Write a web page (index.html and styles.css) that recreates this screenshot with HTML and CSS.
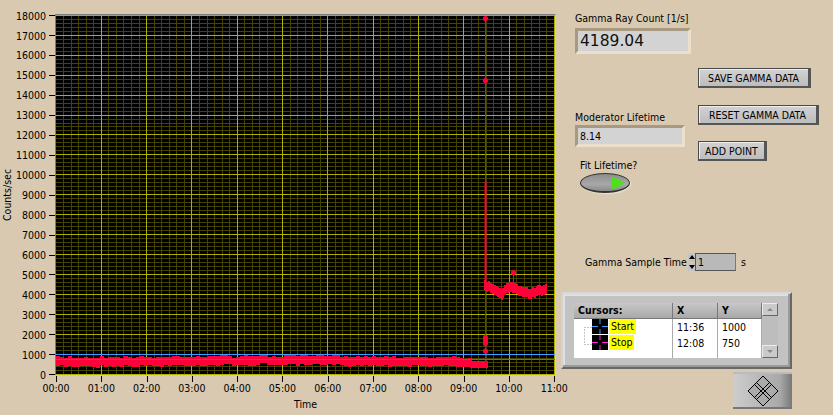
FILE: index.html
```html
<!DOCTYPE html>
<html lang="en">
<head>
<meta charset="utf-8">
<title>Gamma Ray Monitor</title>
<link rel="stylesheet" href="styles.css">
</head>
<body>
<div class="app">
  <section class="chart">
    <div class="ytitle">Counts/sec</div>
    <div class="yaxis">
      <span>18000</span><span>17000</span><span>16000</span><span>15000</span><span>14000</span><span>13000</span><span>12000</span><span>11000</span><span>10000</span><span>9000</span><span>8000</span><span>7000</span><span>6000</span><span>5000</span><span>4000</span><span>3000</span><span>2000</span><span>1000</span><span>0</span>
    </div>
    <div class="plot"><svg id="plot" width="499" height="360" viewBox="56 15 499 360"></svg></div>
    <div class="xaxis">
      <span>00:00</span><span>01:00</span><span>02:00</span><span>03:00</span><span>04:00</span><span>05:00</span><span>06:00</span><span>07:00</span><span>08:00</span><span>09:00</span><span>10:00</span><span>11:00</span>
    </div>
    <div class="xtitle">Time</div>
  </section>

  <aside class="side">
    <div class="top">
      <div class="readouts">
        <div class="label">Gamma Ray Count [1/s]</div>
        <div class="readout readout-big">4189.04</div>
        <div class="label label-mod">Moderator Lifetime</div>
        <div class="readout readout-small">8.14</div>
        <div class="label label-fit">Fit Lifetime?</div>
        <div class="toggle"><svg width="14" height="12" viewBox="0 0 14 12"><path d="M0 0.5 L3 0 L14 6 L3 12 L0 11.5Z" fill="#4fe01c"/></svg></div>
      </div>
      <div class="buttons">
        <button class="btn btn-save">SAVE GAMMA DATA</button>
        <button class="btn btn-reset">RESET GAMMA DATA</button>
        <button class="btn btn-add">ADD POINT</button>
      </div>
    </div>

    <div class="sample">
      <span class="label">Gamma Sample Time</span>
      <span class="spin"><i class="up"></i><i class="down"></i></span>
      <span class="samplebox">1</span>
      <span class="label unit">s</span>
    </div>

    <div class="cursors">
      <div class="table">
        <div class="head h1">Cursors:</div>
        <div class="head h2">X</div>
        <div class="head h3">Y</div>
        <div class="col names">
          <svg class="tree" width="8" height="18" viewBox="0 0 8 18"><path d="M7.5 .5H.5V17.5H7.5" fill="none" stroke="#888" stroke-dasharray="1 2"/></svg>
          <div class="cur"><svg width="16" height="15" viewBox="0 0 16 15"><rect width="16" height="15"/><path d="M0 7.5H6M10 7.5H16M8 0V5M8 10V15" stroke="#3c9cff"/></svg><b>Start</b></div>
          <div class="cur"><svg width="16" height="15" viewBox="0 0 16 15"><rect width="16" height="15"/><path d="M0 7.5H6M10 7.5H16M8 0V5M8 10V15" stroke="#ff20e0"/></svg><b>Stop</b></div>
        </div>
        <div class="col vals"><div>11:36</div><div>12:08</div></div>
        <div class="col vals"><div>1000</div><div>750</div></div>
      </div>
      <div class="scroll">
        <span class="sbtn"><i class="tri-up"></i></span>
        <span class="sbtn"><i class="tri-down"></i></span>
      </div>
    </div>

    <div class="navrow">
      <div class="nav">
        <svg width="32" height="32" viewBox="0 0 32 32"><path d="M16 1L31 16L16 31L1 16Z" fill="#ababab" stroke="#000"/><path d="M7.5 9.5L22.5 24.5M9.5 7.5L24.5 22.5M24.5 9.5L9.5 24.5M22.5 7.5L7.5 22.5" stroke="#000" fill="none"/></svg>
      </div>
    </div>
  </aside>
</div>
<script src="chart.js"></script>
</body>
</html>
```

FILE: styles.css
```css
* { box-sizing: border-box; }
html, body { margin: 0; padding: 0; }
body {
  background: #d9c9b1;
  color: #000;
  font: 10.5px "DejaVu Sans Condensed", "DejaVu Sans", sans-serif;
  font-stretch: condensed;
  overflow: hidden;
}
.app { display: flex; width: 833px; height: 415px; }

/* chart */
.chart {
  width: 561px;
  display: grid;
  grid-template-columns: 14px 41px 501px 5px;
  grid-template-rows: 14px 361px 22px 14px;
}
.ytitle {
  grid-column: 1;
  grid-row: 2;
  writing-mode: vertical-rl;
  transform: rotate(180deg);
  text-align: center;
  line-height: 14px;
  height: 361px;
}
.yaxis {
  grid-column: 1 / 3;
  grid-row: 1 / 3;
  padding-top: 5.6px;
  display: flex;
  flex-direction: column;
}
.yaxis span {
  height: 19.96px;
  line-height: 20px;
  display: flex;
  justify-content: flex-end;
  align-items: center;
  gap: 3px;
}
.yaxis span::after {
  content: "";
  width: 6px;
  height: 1px;
  background: #000;
}
.plot {
  grid-column: 3;
  grid-row: 2;
  background: #000;
  border-top: 1px solid #7c7c7c;
  border-left: 1px solid #7c7c7c;
  border-right: 1px solid #cfcfcf;
}
.plot svg { display: block; }
.xaxis {
  grid-column: 1 / -1;
  grid-row: 3;
  display: flex;
  padding-left: 33.35px;
}
.xaxis span {
  width: 45.3px;
  flex: none;
  text-align: center;
  line-height: 14px;
  padding-top: 6px;
  position: relative;
}
.xaxis span::before {
  content: "";
  position: absolute;
  left: 50%;
  top: 1px;
  width: 1px;
  height: 6px;
  background: #000;
}
.xtitle {
  grid-column: 1 / -1;
  grid-row: 4;
  text-align: center;
  padding-left: 50px;
  line-height: 14px;
}

/* right column */
.side { width: 272px; display: flex; flex-direction: column; }
.top { display: flex; height: 253px; }
.readouts { width: 137px; padding: 12px 0 0 14px; }
.label { line-height: 13px; white-space: nowrap; display: block; }
.readout {
  background: #d3d3d3;
  border: 3px solid;
  border-color: #a89a82 #ece0cc #ece0cc #a89a82;
  display: flex;
  align-items: center;
}
.readout-big {
  width: 116px;
  height: 26px;
  margin-top: 3px;
  padding-left: 2px;
  font: 15.5px "DejaVu Sans", sans-serif;
  color: #111;
}
.label-mod { margin-top: 57px; }
.readout-small {
  width: 110px;
  height: 22px;
  margin-top: 1px;
  padding-left: 2px;
}
.label-fit { margin: 12px 0 0 5px; }
.toggle {
  margin: 1px 0 0 5px;
  width: 50px;
  height: 20px;
  border-radius: 50%;
  border: 1px solid #333;
  border-bottom-width: 2px;
  background: linear-gradient(#8c8c8c, #a8a8a8 60%, #8a8a8a);
  box-shadow: 1px 1px 1px #f0e6d4;
  display: flex;
  align-items: center;
  justify-content: flex-end;
  padding-right: 4px;
}
.toggle svg { display: block; }
.buttons { display: flex; flex-direction: column; align-items: flex-start; padding-top: 68px; }
.btn {
  font: inherit;
  font-stretch: condensed;
  color: #000;
  height: 20px;
  padding: 0;
  border: 1px solid #4a4a4a;
  border-right: 3px solid #555;
  border-bottom: 2px solid #555;
  background: linear-gradient(#d2d2d2, #bdbdbd);
  box-shadow: inset 1px 1px 0 #eee;
}
.btn-save { width: 113px; }
.btn-reset { width: 121px; margin-top: 17px; }
.btn-add { width: 69px; margin-top: 16px; }

.sample { display: flex; align-items: center; height: 18px; margin-left: 24px; }
.sample .label { width: 103px; }
.spin { width: 7px; height: 18px; display: flex; flex-direction: column; gap: 1px; }
.spin i { flex: 1; background: #c4c4c4; position: relative; display: block; }
.spin i::after {
  content: "";
  position: absolute;
  left: 0.5px;
  border-left: 3px solid transparent;
  border-right: 3px solid transparent;
}
.spin .up::after { top: 2px; border-bottom: 4px solid #000; }
.spin .down::after { top: 2px; border-top: 4px solid #000; }
.samplebox {
  width: 41px;
  height: 18px;
  background: #b9b9b9;
  border: 1px solid #555;
  border-right-color: #777;
  padding-left: 2px;
  line-height: 16px;
}
.sample .unit { width: auto; margin-left: 5px; }

.cursors {
  width: 231px;
  height: 77px;
  margin-top: 21px;
  display: flex;
  padding: 9px 12px 8px 11px;
  background: #c2c2c2;
  border: 2px solid;
  border-color: #d8d8d8 #686868 #686868 #d2d2d2;
  box-shadow: inset -2px -2px 0 #9a9a9a, inset 2px 2px 0 #e0e0e0;
}
.table {
  width: 188px;
  height: 55px;
  background: #fff;
  display: grid;
  grid-template-columns: 99px 45px 44px;
  grid-template-rows: 16px 39px;
}
.head {
  background: linear-gradient(#c8c8c8, #a8a8a8);
  border-bottom: 1px solid #777;
  border-right: 1px solid #777;
  font-weight: bold;
  line-height: 15px;
  padding-left: 4px;
}
.col { border-right: 1px solid #aaa; position: relative; }
.col > div { height: 16px; line-height: 16px; padding-left: 4px; }
.names { padding-left: 18px; }
.names .cur { display: flex; height: 16px; padding: 0; align-items: flex-start; }
.names .cur svg { display: block; flex: none; }
.names .cur b { font-weight: normal; background: #ffff00; padding: 0 2px; height: 15px; line-height: 15px; margin-left: 1px; }
.tree { position: absolute; left: 10px; top: 8px; }
.scroll {
  width: 16px;
  height: 55px;
  background: #bdbdbd;
  display: flex;
  flex-direction: column;
  justify-content: space-between;
}
.sbtn {
  height: 13px;
  background: #cacaca;
  border: 1px solid;
  border-color: #ececec #666 #666 #ececec;
  display: flex;
  align-items: center;
  justify-content: center;
}
.tri-up, .tri-down { border-left: 3px solid transparent; border-right: 3px solid transparent; }
.tri-up { border-bottom: 3px solid #888; }
.tri-down { border-top: 3px solid #888; }

.navrow { display: flex; margin-top: 3px; padding-left: 172px; }
.nav {
  width: 59px;
  height: 37px;
  background: linear-gradient(90deg, #cdcdcd, #b4b4b4 55%, #a8a8a8 80%, #777);
  border-top: 2px solid #bbb;
  border-bottom: 2px solid #777;
  display: flex;
  align-items: center;
  justify-content: center;
}
.nav svg { display: block; }
```

FILE: chart.js
```js
(function () {
  var NS = 'http://www.w3.org/2000/svg';
  var svg = document.getElementById('plot');
  function add(tag, attrs, parent) {
    var el = document.createElementNS(NS, tag);
    for (var k in attrs) el.setAttribute(k, attrs[k]);
    (parent || svg).appendChild(el);
    return el;
  }
  var grid = add('g', { 'shape-rendering': 'crispEdges', 'stroke-width': 1 });
  var X0 = 56, DX = 45.3, Y0 = 374.5, DY = 19.96;
  var minor = '#444400', major = '#b0b000';
  function vline(x, c) { var p = Math.floor(x) + 0.5; add('line', { x1: p, x2: p, y1: 15, y2: 375, stroke: c }, grid); }
  function hline(y, c) { var p = Math.floor(y) + 0.5; add('line', { x1: 56, x2: 555, y1: p, y2: p, stroke: c }, grid); }
  var i, j;
  for (i = 0; i < 11; i++) for (j = 1; j < 6; j++) vline(X0 + (i + j / 6) * DX, minor);
  for (i = 0; i < 18; i++) for (j = 1; j < 5; j++) hline(Y0 - (i + j / 5) * DY, minor);
  for (i = 1; i <= 11; i++) vline(X0 + i * DX, major);
  for (i = 0; i <= 18; i++) hline(Y0 - i * DY, major);

  var RED = '#ff0038';
  var seed = 7;
  function rnd() { seed = (seed * 16807) % 2147483647; return seed / 2147483647; }
  var trace = add('g', { fill: RED, 'shape-rendering': 'crispEdges' });
  function band(x, cy, h, w) { add('rect', { x: x, y: Math.round(cy - h / 2), width: w, height: h }, trace); }
  var x;
  for (x = 56; x < 470; x += 4) {
    var slow = 361 + Math.sin(x / 60) * 0.7;
    band(x, slow + (rnd() - 0.5) * 2, 8 + Math.round(rnd() * 2), 4);
  }
  for (x = 470; x < 488; x += 2) band(x, 364, 7, 2);

  var pts = [[484, 284], [490, 289], [497, 293], [502, 293.5], [507, 288], [512, 287], [518, 290], [524, 293], [530, 293], [537, 291], [546, 290]];
  for (i = 0; i < pts.length - 1; i++) {
    for (x = pts[i][0]; x < pts[i + 1][0]; x += 2) {
      var t = (x - pts[i][0]) / (pts[i + 1][0] - pts[i][0]);
      band(x, pts[i][1] + (pts[i + 1][1] - pts[i][1]) * t + (rnd() - 0.5) * 2.5, 10, 2);
    }
  }
  add('line', { x1: 485.5, x2: 485.5, y1: 18, y2: 182, stroke: '#c4202c', 'stroke-width': 1 });
  add('line', { x1: 485.5, x2: 485.5, y1: 182, y2: 290, stroke: RED, 'stroke-width': 2 });
  add('line', { x1: 485.5, x2: 485.5, y1: 290, y2: 364, stroke: '#c8102c', 'stroke-width': 1 });
  add('line', { x1: 513.5, x2: 513.5, y1: 272, y2: 288, stroke: RED, 'stroke-width': 1 });
  [[485.5, 18.5], [485.5, 80.5], [513.5, 272.5], [485.5, 351]].forEach(function (p) {
    add('circle', { cx: p[0], cy: p[1], r: 2.6, fill: RED });
  });
  add('rect', { x: 483, y: 335, width: 5, height: 11, rx: 2, fill: RED });

  add('line', { x1: 56, x2: 555, y1: 354.5, y2: 354.5, stroke: '#3c9cff', 'shape-rendering': 'crispEdges' });
  add('line', { x1: 56, x2: 555, y1: 359.5, y2: 359.5, stroke: '#ff10b0', 'shape-rendering': 'crispEdges' });
})();
```
